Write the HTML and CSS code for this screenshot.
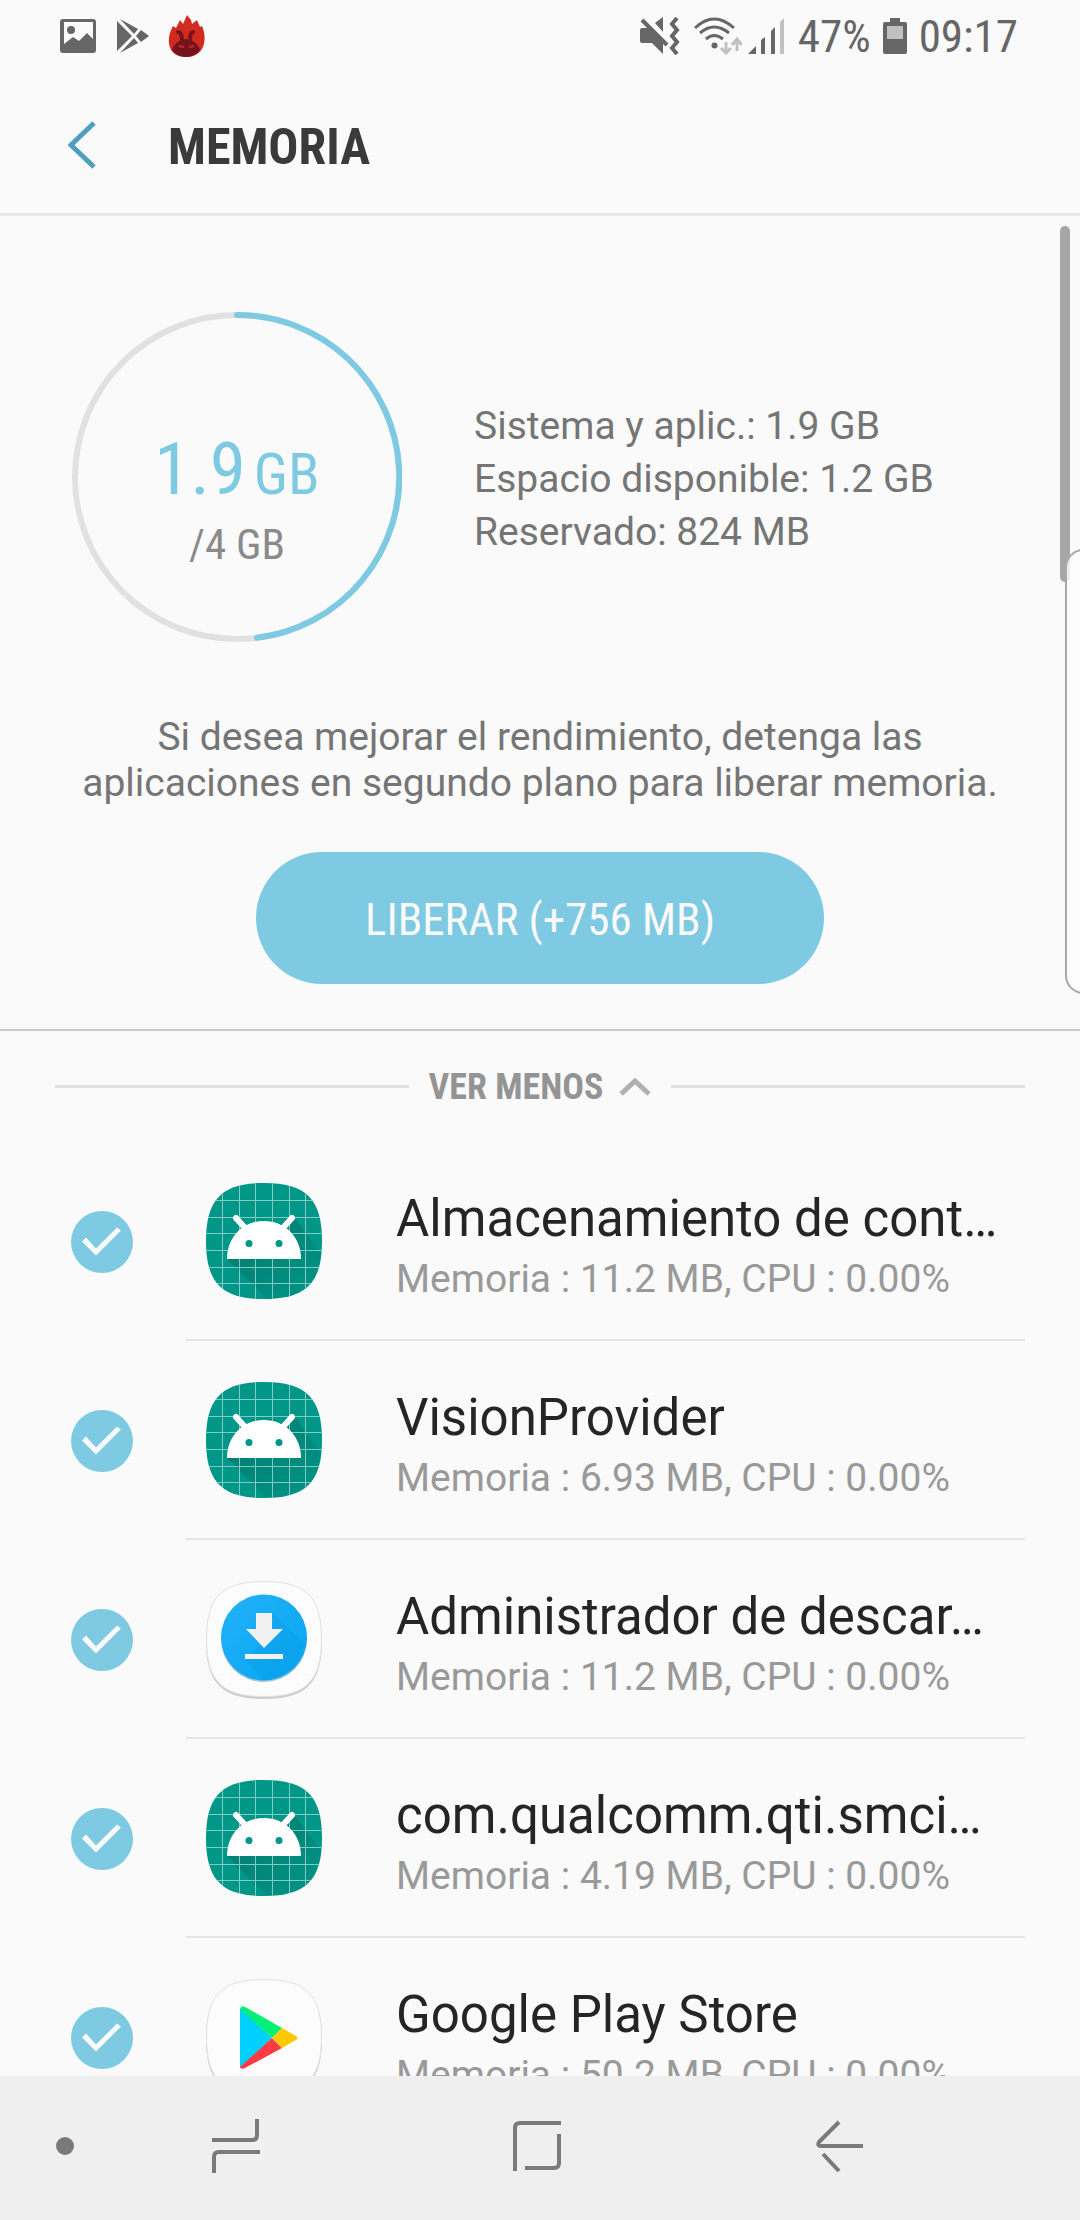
FILE: index.html
```html
<!DOCTYPE html>
<html lang="es">
<head>
<meta charset="utf-8">
<meta name="viewport" content="width=device-width, initial-scale=1">
<title>Memoria</title>
<link rel="stylesheet" href="styles.css">
</head>
<body>
<svg class="defs" aria-hidden="true">
  <defs>
    <linearGradient id="shade" x1="0" y1="0" x2="1" y2="1">
      <stop offset="0" stop-color="#004d40" stop-opacity=".4"/>
      <stop offset="1" stop-color="#004d40" stop-opacity="0"/>
    </linearGradient>
    <linearGradient id="sky" x1="0" y1="0" x2="1" y2="1">
      <stop offset="0" stop-color="#22b2f7"/>
      <stop offset="1" stop-color="#06a6f2"/>
    </linearGradient>
    <clipPath id="tile-clip"><path d="M58 0C100 0 116 16 116 58S100 116 58 116 0 100 0 58 16 0 58 0Z"/></clipPath>
    <symbol id="android" viewBox="0 0 118 118">
      <g clip-path="url(#tile-clip)">
        <path fill="#009688" d="M0 0h116v116H0z"/>
        <path d="M21 76 61 116H116V72L88 34Z" fill="url(#shade)"/>
        <path fill="none" stroke="#80cbc4" stroke-width="1" d="M16.500 0v116M33.500 0v116M49.500 0v116M66.500 0v116M83.500 0v116M99.500 0v116M0 17.500h116M0 34.500h116M0 50.500h116M0 67.500h116M0 84.500h116M0 100.500h116"/>
      </g>
      <path d="M30 35 40 46M86 35 76 46" stroke="#fff" stroke-width="6" stroke-linecap="round"/>
      <path fill="#fff" d="M21 76C21 54 37 38 58 38S95 54 95 76Z"/>
      <circle cx="43" cy="60.500" r="3.500" fill="#009688"/><circle cx="73" cy="60.500" r="3.500" fill="#009688"/>
    </symbol>
    <symbol id="download" viewBox="0 0 118 118">
      <path fill="#ccc" d="M58 2C100 2 116 18 116 60S100 118 58 118 0 102 0 60 16 2 58 2Z"/>
      <path fill="#fcfcfc" stroke="#e2e2e2" d="M58 0.500C100 .5 115.500 16 115.500 58S100 115.500 58 115.500 .5 100 .5 58 16 .5 58 .5Z"/>
      <circle cx="58" cy="58" r="43" fill="#a9c4d2"/>
      <circle cx="58" cy="56.500" r="43" fill="url(#sky)"/>
      <path d="M67 32 98 62A43 43 0 0 1 58 99L39 79 58 60Z" fill="#0288d1" opacity=".15"/>
      <path fill="#f1f1f1" d="M50 32H66V48H77L58 67 40 48H50ZM39 73H77V78H39Z"/>
    </symbol>
    <symbol id="play" viewBox="0 0 118 118">
      <path fill="#ccc" d="M58 2C100 2 116 18 116 60S100 118 58 118 0 102 0 60 16 2 58 2Z"/>
      <path fill="#fcfcfc" stroke="#e2e2e2" d="M58 0.500C100 .5 115.500 16 115.500 58S100 115.500 58 115.500 .5 100 .5 58 16 .5 58 .5Z"/>
      <path fill="#00d0ff" d="M34 29V89L66 59Z"/>
      <path fill="#00f076" d="M34 30Q35 26 39 28L76 49 66 59Z"/>
      <path fill="#ff3a44" d="M34 88Q35 91 39 89L76 69 66 59Z"/>
      <path fill="#ffc900" d="M76 49 90 57Q93 59 90 61L76 69 66 59Z"/>
    </symbol>
  </defs>
</svg>

<div class="screen">
  <div class="status">
    <div class="status-group">
      <svg width="36" height="34" viewBox="0 0 36 34"><path fill="#666" fill-rule="evenodd" d="M3 0H33Q36 0 36 3V31Q36 34 33 34H3Q0 34 0 31V3Q0 0 3 0ZM4 3V25L13 18 19 22 27 14 33 20V3Z"/><circle cx="11" cy="11" r="4" fill="#666"/></svg>
      <svg class="status-play" width="32" height="34" viewBox="0 0 32 34"><path fill="#666" d="M0 2 15 17 0 32ZM3 0 21 10 17 15ZM3 34 21 24 17 19ZM24 11 32 17 24 23 19 17Z"/></svg>
      <svg class="status-flame" width="38" height="42" viewBox="0 0 38 42"><path fill="#d12b20" d="M19 0 23 5 24 9 29 5 32 12 34 11C40 25 36 42 18 42S-3 25 5 11L8 13 12 5 15 9Z"/><path fill="#76121a" d="M4 35Q7 25 18 24 29 25 32 35 27 42 18 42 9 42 4 35Z"/><path fill="none" stroke="#76121a" stroke-width="4" stroke-linecap="round" d="M10 17Q14 17 14 26M25 17Q22 17 22 26"/><path stroke="#c9282a" stroke-width="2" d="M11 31 16 32M26 31 21 32"/></svg>
    </div>
    <div class="status-group">
      <svg width="40" height="38" viewBox="0 0 40 38"><path fill="#666" d="M0 13Q0 11 2 11H10L23 24V37L12 26H2Q0 26 0 24ZM15 6 23 0V15Z"/><path d="M2 3 27 28" stroke="#666" stroke-width="4"/><path fill="none" stroke="#666" stroke-width="4" d="m37 1-5 6 5 6-5 6 5 6-5 6 5 6"/></svg>
      <svg class="wifi" width="48" height="38" viewBox="0 0 48 38"><g fill="none" stroke="#666" stroke-width="3"><path d="M1 11Q20-7 40 11M6 16Q20 4 35 16M12 22Q20 15 29 22"/></g><circle cx="20.500" cy="28.500" r="3" fill="#666"/><path fill="none" stroke="#c0c0c0" stroke-width="3" d="M32 25V36M27 31 32 36 37 31M43 34V23M38 28 43 22 48 28"/></svg>
      <svg class="signal" width="36" height="36" viewBox="0 0 36 36"><path fill="#666" d="M0 36 8 28V36ZM13 36V22L17 19V36ZM23 36V13L27 9V36Z"/><path fill="#c0c0c0" d="M32 36V4L36 0V36Z"/></svg>
      <span>47%</span>
      <svg class="battery" width="24" height="36" viewBox="0 0 24 36"><path fill="#666" d="M7 0H17V4H22Q24 4 24 6V34Q24 36 22 36H2Q0 36 0 34V6Q0 4 2 4H7Z"/><path fill="#c0c0c0" d="M4 8H20V21H4Z"/></svg>
      <span>09:17</span>
    </div>
  </div>

  <header class="header">
    <button class="back" aria-label="Volver"><svg width="28" height="48" viewBox="0 0 28 48"><path fill="none" stroke="#4e9fbf" stroke-width="5" d="M26 2 3 24 26 46"/></svg></button>
    <h1>MEMORIA</h1>
  </header>

  <main class="content">
    <section class="summary">
      <div class="usage">
        <div class="ring">
          <svg width="330" height="330" viewBox="0 0 330 330"><circle cx="165" cy="165" r="162" fill="none" stroke="#e1e1e1" stroke-width="6"/><path fill="none" stroke="#7ecae2" stroke-width="6" stroke-linecap="round" d="M165 3A162 162 0 0 1 185 325.800"/></svg>
          <div class="ring-text">
            <div class="used"><span class="used-number">1.9</span><span class="used-unit">GB</span></div>
            <div class="total">/4 GB</div>
          </div>
        </div>
        <div class="facts">
          <div>Sistema y aplic.: 1.9 GB</div>
          <div>Espacio disponible: 1.2 GB</div>
          <div>Reservado: 824 MB</div>
        </div>
      </div>
      <p class="advice">Si desea mejorar el rendimiento, detenga las aplicaciones en segundo plano para liberar memoria.</p>
      <button class="free">LIBERAR (+756 MB)</button>
    </section>

    <button class="toggle"><span>VER MENOS</span><svg width="32" height="18" viewBox="0 0 32 18"><path fill="none" stroke="#b0b0b0" stroke-width="5" d="M2 16 16 3 30 16"/></svg></button>

    <ul class="apps">
      <li class="app">
        <input type="checkbox" id="app1" checked>
        <label for="app1"><svg class="icon"><use href="#android"/></svg><span class="texts"><span class="name">Almacenamiento de cont…</span><span class="meta">Memoria : 11.2 MB, CPU : 0.00%</span></span></label>
      </li>
      <li class="app">
        <input type="checkbox" id="app2" checked>
        <label for="app2"><svg class="icon"><use href="#android"/></svg><span class="texts"><span class="name">VisionProvider</span><span class="meta">Memoria : 6.93 MB, CPU : 0.00%</span></span></label>
      </li>
      <li class="app">
        <input type="checkbox" id="app3" checked>
        <label for="app3"><svg class="icon"><use href="#download"/></svg><span class="texts"><span class="name">Administrador de descar…</span><span class="meta">Memoria : 11.2 MB, CPU : 0.00%</span></span></label>
      </li>
      <li class="app">
        <input type="checkbox" id="app4" checked>
        <label for="app4"><svg class="icon"><use href="#android"/></svg><span class="texts"><span class="name">com.qualcomm.qti.smci…</span><span class="meta">Memoria : 4.19 MB, CPU : 0.00%</span></span></label>
      </li>
      <li class="app">
        <input type="checkbox" id="app5" checked>
        <label for="app5"><svg class="icon"><use href="#play"/></svg><span class="texts"><span class="name">Google Play Store</span><span class="meta">Memoria : 50.2 MB, CPU : 0.00%</span></span></label>
      </li>
    </ul>
    <div class="scrollbar"></div>
    <div class="edge-panel"></div>
  </main>

  <nav class="nav">
    <button class="dot" aria-label="Ocultar barra"></button>
    <button class="recents" aria-label="Recientes"><svg width="48" height="54" viewBox="0 0 48 54"><path fill="none" stroke="#7a7a7a" stroke-width="4" d="M45 0V16Q45 21 40 21H0M48 33H7Q2 33 2 38V54"/></svg></button>
    <button class="home" aria-label="Inicio"><svg width="48" height="50" viewBox="0 0 48 50"><path fill="none" stroke="#7a7a7a" stroke-width="4" d="M2 50V7Q2 2 7 2H48M46 13V42Q46 47 41 47H12"/></svg></button>
    <button class="return" aria-label="Atrás"><svg width="48" height="52" viewBox="0 0 48 52"><path fill="none" stroke="#7a7a7a" stroke-width="4" d="M23 2 3 22Q1 26 5 26H47M7 34 23 51"/></svg></button>
  </nav>
</div>
</body>
</html>
```

FILE: styles.css
```css
* { box-sizing: border-box; }

html, body { height: 100%; }

body {
  margin: 0;
  background: #fafafa;
  color: #252525;
  font-family: Roboto, sans-serif;
}

button {
  padding: 0;
  border: 0;
  background: none;
  font-family: "Roboto Condensed", Roboto, sans-serif;
}

svg { display: block; flex: none; }

.defs { position: absolute; width: 0; height: 0; }

.screen {
  display: flex;
  flex-direction: column;
  height: 100vh;
  overflow: hidden;
}

.status {
  flex: none;
  display: flex;
  justify-content: space-between;
  height: 72px;
  padding: 0 62px 0 60px;
  color: #666;
  font: 45px/72px "Roboto Condensed", Roboto, sans-serif;
}

.status-group { display: flex; align-items: center; }
.status-group span { padding-top: 2px; }
.status-play { margin-left: 21px; }
.status-flame { margin-left: 19px; }
.wifi { margin-left: 14px; }
.signal { margin: 0 14px 0 6px; }
.battery { margin: 0 12px; }

.header {
  flex: none;
  display: flex;
  align-items: center;
  height: 144px;
  padding-left: 68px;
  border-bottom: 3px solid #e6e6e6;
}

.back { margin-right: 72px; padding-top: 4px; }

h1 {
  margin: 0;
  padding-top: 8px;
  color: #3a3a3a;
  font: 700 50px/60px "Roboto Condensed", Roboto, sans-serif;
}

.content {
  position: relative;
  flex: 1;
  min-height: 0;
  overflow: hidden;
}

.summary {
  display: flex;
  flex-direction: column;
  align-items: center;
  padding: 96px 72px 45px;
  border-bottom: 2px solid #ccc;
}

.usage {
  display: flex;
  align-items: center;
  align-self: stretch;
  gap: 72px;
}

.ring { display: grid; }
.ring > * { grid-area: 1 / 1; }

.ring-text {
  align-self: center;
  padding-top: 44px;
  text-align: center;
  font-family: "Roboto Condensed", Roboto, sans-serif;
}

.used {
  display: flex;
  justify-content: center;
  align-items: baseline;
  gap: 8px;
  color: #7ecae2;
  line-height: 84px;
}

.used-number { font-size: 73px; }
.used-unit { font-size: 58px; }
.total { color: #8a8a8a; font-size: 43px; line-height: 56px; }

.facts { padding-top: 4px; color: #757575; font-size: 39px; line-height: 53px; }

.advice {
  margin: 72px 0 46px;
  color: #757575;
  font-size: 39px;
  line-height: 46px;
  text-align: center;
}

.free {
  width: 568px;
  max-width: 100%;
  height: 132px;
  padding-top: 2px;
  border-radius: 66px;
  background: #7ecae2;
  color: #fafafa;
  font-size: 45px;
}

.toggle {
  display: flex;
  align-items: center;
  width: 100%;
  height: 111px;
  padding: 0 55px;
  color: #949494;
  font-size: 36px;
  font-weight: 700;
}

.toggle::before, .toggle::after {
  content: "";
  flex: 1;
  height: 3px;
  background: #e1e1e1;
}

.toggle::before { margin-right: 20px; }
.toggle::after { margin-left: 20px; }
.toggle svg { margin-left: 16px; }

.apps { margin: 0; padding: 0; list-style: none; }

.app {
  display: flex;
  align-items: center;
  padding: 0 55px 0 71px;
}

.app input {
  appearance: none;
  flex: none;
  display: grid;
  width: 62px;
  height: 62px;
  margin: 0 53px 0 0;
  border-radius: 50%;
  background: #7ecae2;
}

.app input:checked::before {
  content: "";
  background: #fafafa;
  clip-path: polygon(11px 31px, 15px 27px, 25px 38px, 46px 17px, 50px 20px, 25px 45px);
}

.app label {
  flex: 1;
  min-width: 0;
  display: flex;
  align-items: center;
  gap: 72px;
  height: 199px;
  padding: 2px 20px 0;
  border-bottom: 2px solid #e5e5e5;
}

.icon { width: 118px; height: 118px; }

.texts { flex: 1; min-width: 0; display: grid; padding-top: 10px; }

.name {
  overflow: hidden;
  color: #252525;
  font-size: 51px;
  line-height: 64px;
  text-overflow: ellipsis;
  white-space: nowrap;
}

.meta { color: #999; font-size: 39px; line-height: 56px; }

.scrollbar {
  position: absolute;
  top: 10px;
  right: 10px;
  width: 10px;
  height: 356px;
  border-radius: 5px;
  background: #a6a6a6;
}

.edge-panel {
  position: absolute;
  top: 333px;
  right: -22px;
  width: 37px;
  height: 445px;
  border: 2px solid #a8a8a8;
  border-radius: 20px;
  background: rgba(252, 252, 252, 0.8);
}

.nav {
  flex: none;
  display: grid;
  grid-template-columns: 130fr 211fr 392fr 214fr 133fr;
  place-items: center;
  height: 144px;
  padding-bottom: 4px;
  background: #efefef;
}

.dot {
  width: 18px;
  height: 18px;
  border-radius: 50%;
  background: #7a7a7a;
}
```
